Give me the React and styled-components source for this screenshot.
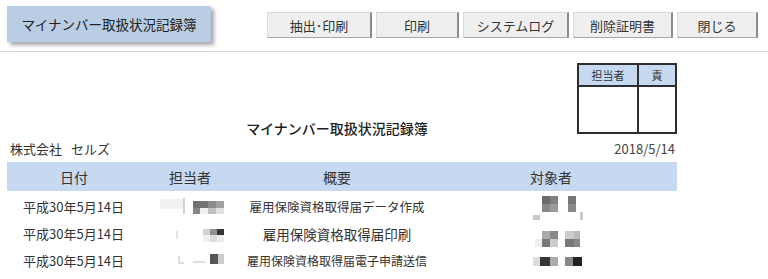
import React from 'react';
import styled, { createGlobalStyle } from 'styled-components';

const FONT = '"Noto Sans CJK JP", "Noto Sans", "Liberation Sans", sans-serif';
const C_HEAD = '#c6d9f0';
const C_TEXT = '#2b2b2b';
const C_LINE = '#2e2e2e';

const GlobalStyle = createGlobalStyle`
  html, body {
    margin: 0;
    padding: 0;
    background: #ffffff;
    font-family: ${FONT};
    color: ${C_TEXT};
  }
`;

const Page = styled.div`
  width: 768px;
  height: 279px;
  overflow: hidden;
  background: #ffffff;
`;

const TopBar = styled.div`
  display: flex;
  align-items: flex-start;
  height: 52px;
  padding-left: 7px;
  border-bottom: 1px solid #d2d2d2;
  box-sizing: border-box;
`;

const TitleButton = styled.div`
  display: flex;
  align-items: center;
  justify-content: center;
  width: 204px;
  height: 36px;
  margin-top: 6px;
  background: #b9cde5;
  box-shadow: 3px 3px 4px rgba(0, 0, 0, 0.35);
  font-size: 13.5px;
  color: #222;
`;

const Toolbar = styled.div`
  display: flex;
  gap: 4px;
  margin-top: 12px;
  margin-left: 56px;
`;

const ToolButton = styled.button`
  width: ${({ w }) => w}px;
  height: 26px;
  padding: 0;
  background: #efefef;
  border: 1px solid #dadada;
  border-right: 2px solid #8c8c8c;
  border-bottom: 1px solid #a6a6a6;
  font-family: ${FONT};
  font-size: 13px;
  color: #333;
`;

const Report = styled.div`
  width: 670px;
  margin-left: 7px;
`;

const Head = styled.div`
  display: grid;
  grid-template-columns: 1fr auto 1fr;
  margin-top: 11px;
`;

const ReportTitle = styled.div`
  grid-column: 2;
  align-self: end;
  margin-bottom: -3px;
  margin-right: 10px;
  font-size: 14px;
  font-weight: 500;
  line-height: 18px;
  color: #1e1e1e;
`;

const Stamp = styled.div`
  grid-column: 3;
  justify-self: end;
  display: grid;
  grid-template-columns: 60px 36px;
  grid-template-rows: 22px 45px;
  width: 100px;
  height: 71px;
  box-sizing: border-box;
  border: 2px solid ${C_LINE};
`;

const StampCell = styled.div`
  display: flex;
  align-items: center;
  justify-content: center;
  background: ${({ head }) => (head ? C_HEAD : '#ffffff')};
  border-right: ${({ left }) => (left ? `2px solid ${C_LINE}` : 'none')};
  border-bottom: ${({ head }) => (head ? `2px solid ${C_LINE}` : 'none')};
  font-size: 11px;
  color: #333;
`;

const InfoRow = styled.div`
  display: flex;
  justify-content: space-between;
  margin-top: 7px;
  margin-left: 3px;
  font-size: 13px;
  line-height: 16px;
  color: #333;
`;

const Company = styled.span`
  display: flex;
  gap: 9px;
`;

const DateText = styled.span`
  margin-right: 2px;
  color: #444;
`;

const COLS = '134px 98px 196px 232px 10px';

const HeaderRow = styled.div`
  display: grid;
  grid-template-columns: ${COLS};
  height: 29px;
  margin-top: 5px;
  background: ${C_HEAD};
  font-size: 14px;
  color: #333;
`;

const HeadCell = styled.div`
  display: flex;
  align-items: center;
  justify-content: center;
`;

const Rows = styled.div`
  display: flex;
  flex-direction: column;
  margin-top: 2px;
`;

const Row = styled.div`
  display: grid;
  grid-template-columns: ${COLS};
  height: 27px;
  color: #333;
`;

const Cell = styled.div`
  display: flex;
  align-items: center;
  justify-content: ${({ align }) => align || 'center'};
  padding-left: ${({ pad }) => pad || 0}px;
  font-size: ${({ size }) => size || 13}px;
  white-space: nowrap;
`;

const Mosaic = ({ width, cells }) => (
  <svg width={width} height="27" viewBox={`0 0 ${width} 27`}>
    <defs>
      <filter id="soft" x="-10%" y="-10%" width="120%" height="120%">
        <feGaussianBlur stdDeviation="0.5" />
      </filter>
    </defs>
    <g filter="url(#soft)">
      {cells.map(([x, y, w, h, fill], i) => (
        <rect key={i} x={x} y={y} width={w} height={h} fill={fill} />
      ))}
    </g>
  </svg>
);

const staffCells = [
  [
    [19, 6, 23, 10, '#f1f1f1'],
    [42, 5, 2, 16, '#d2d2d2'],
    [52, 8, 15, 7, '#727272'],
    [67, 8, 8, 7, '#8a8a8a'],
    [75, 8, 8, 7, '#a2a2a2'],
    [52, 15, 7, 6, '#888888'],
    [59, 15, 8, 6, '#f0f0f0'],
    [67, 15, 8, 6, '#c0c0c0'],
    [75, 15, 8, 6, '#e0e0e0'],
  ],
  [
    [35, 11, 2, 8, '#e6e6e6'],
    [62, 9, 7, 6, '#d2d2d2'],
    [69, 9, 7, 6, '#909090'],
    [76, 9, 7, 6, '#353535'],
    [62, 15, 7, 7, '#eeeeee'],
    [69, 15, 7, 7, '#dddddd'],
    [76, 15, 7, 7, '#ececec'],
  ],
  [
    [37, 9, 2, 7, '#dcdcdc'],
    [37, 15, 6, 2, '#dcdcdc'],
    [52, 14, 12, 2, '#dedede'],
    [69, 7, 8, 10, '#555555'],
    [77, 7, 6, 10, '#cccccc'],
  ],
];

const targetCells = [
  [
    [107, 3, 8, 8, '#6a6a6a'],
    [115, 3, 8, 8, '#808080'],
    [107, 11, 8, 8, '#888888'],
    [115, 11, 8, 8, '#9a9a9a'],
    [98, 22, 7, 5, '#c8c8c8'],
    [133, 3, 8, 8, '#777777'],
    [133, 11, 8, 8, '#8a8a8a'],
    [145, 19, 3, 8, '#cccccc'],
  ],
  [
    [100, 19, 7, 8, '#eeeeee'],
    [107, 11, 8, 8, '#aaaaaa'],
    [107, 19, 8, 8, '#777777'],
    [115, 11, 8, 8, '#888888'],
    [115, 19, 8, 8, '#cccccc'],
    [130, 11, 9, 8, '#cccccc'],
    [130, 19, 9, 8, '#777777'],
    [139, 11, 6, 8, '#bbbbbb'],
    [139, 19, 6, 8, '#888888'],
  ],
  [
    [98, 10, 7, 9, '#dddddd'],
    [105, 10, 10, 9, '#353535'],
    [115, 10, 8, 9, '#aaaaaa'],
    [130, 10, 8, 9, '#888888'],
    [138, 10, 9, 9, '#222222'],
  ],
];

const records = [
  { date: '平成30年5月14日', summary: '雇用保険資格取得届データ作成', size: 12.5 },
  { date: '平成30年5月14日', summary: '雇用保険資格取得届印刷', size: 13.5 },
  { date: '平成30年5月14日', summary: '雇用保険資格取得届電子申請送信', size: 12 },
];

const buttons = [
  { label: '抽出･印刷', w: 105 },
  { label: '印刷', w: 83 },
  { label: 'システムログ', w: 106 },
  { label: '削除証明書', w: 100 },
  { label: '閉じる', w: 81 },
];

const App = () => (
  <Page>
    <GlobalStyle />
    <TopBar>
      <TitleButton>マイナンバー取扱状況記録簿</TitleButton>
      <Toolbar>
        {buttons.map((b) => (
          <ToolButton key={b.label} w={b.w}>
            {b.label}
          </ToolButton>
        ))}
      </Toolbar>
    </TopBar>
    <Report>
      <Head>
        <ReportTitle>マイナンバー取扱状況記録簿</ReportTitle>
        <Stamp>
          <StampCell head left>担当者</StampCell>
          <StampCell head>責</StampCell>
          <StampCell left />
          <StampCell />
        </Stamp>
      </Head>
      <InfoRow>
        <Company>
          <span>株式会社</span>
          <span>セルズ</span>
        </Company>
        <DateText>2018/5/14</DateText>
      </InfoRow>
      <HeaderRow>
        <HeadCell>日付</HeadCell>
        <HeadCell>担当者</HeadCell>
        <HeadCell>概要</HeadCell>
        <HeadCell>対象者</HeadCell>
        <HeadCell />
      </HeaderRow>
      <Rows>
        {records.map((r, i) => (
          <Row key={i}>
            <Cell align="flex-start" pad={16}>
              {r.date}
            </Cell>
            <Cell>
              <Mosaic width={98} cells={staffCells[i]} />
            </Cell>
            <Cell size={r.size}>{r.summary}</Cell>
            <Cell>
              <Mosaic width={232} cells={targetCells[i]} />
            </Cell>
            <Cell />
          </Row>
        ))}
      </Rows>
    </Report>
  </Page>
);

export default App;
